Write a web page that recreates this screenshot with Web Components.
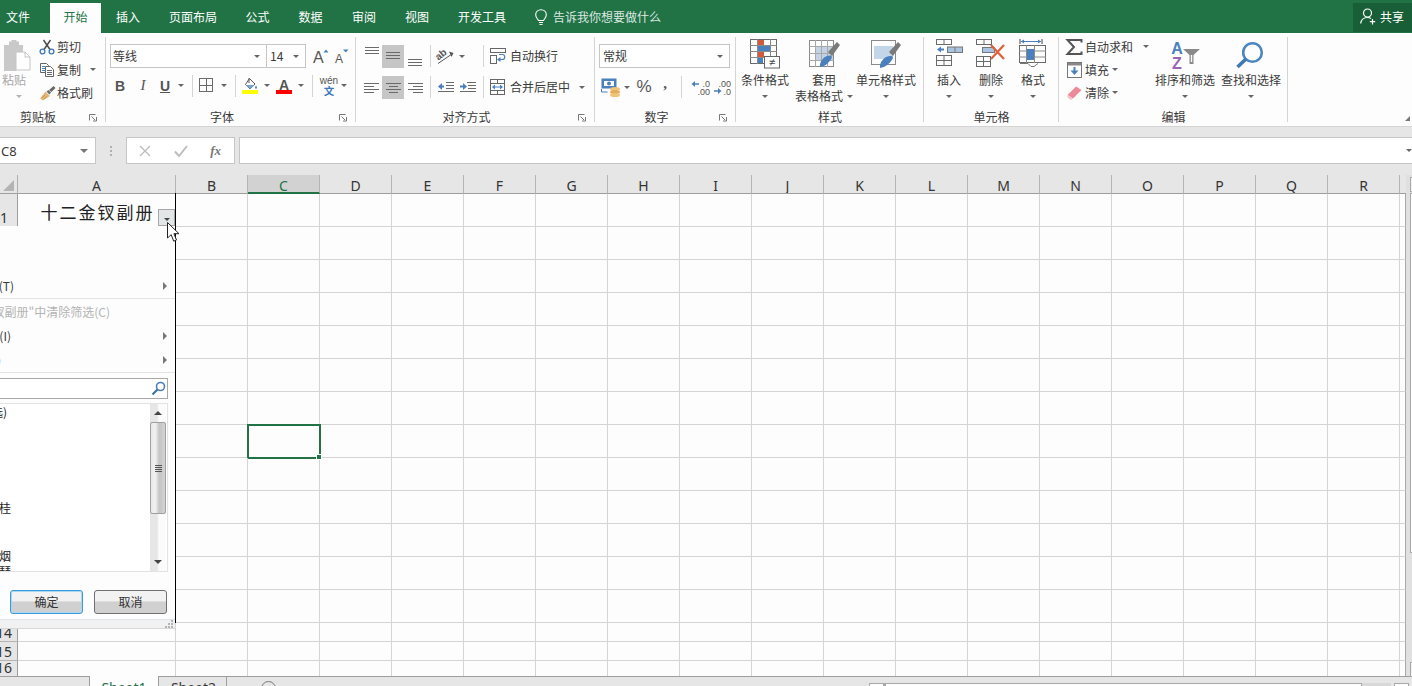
<!DOCTYPE html>
<html lang="zh"><head><meta charset="utf-8"><title>Excel</title>
<style>
html,body{margin:0;padding:0;height:100%;overflow:hidden;background:#e6e6e6}
body{font-family:"Noto Sans CJK SC","Noto Sans",sans-serif;font-size:12px;color:#3a3a3a}
</style></head><body>
<xl-app></xl-app>
<script>
const FONT='"Noto Sans CJK SC","Noto Sans",sans-serif';
const G='#6a6a6a',B='#4a80bd',R='#d4583a';
const L=(x1,y,x2,c=G)=>`<path d="M${x1} ${y+.5}H${x2}" stroke="${c}"/>`;
const grid=(x,y,w,h,c=G)=>`<rect x="${x+.5}" y="${y+.5}" width="${w-1}" height="${h-1}" fill="none" stroke="${c}"/>`;
const ICONS={
 paste:[30,33,`<path d="M3 7h5V3.5h2.5V2h5v1.500H18V7h4v7h-7v19H3z" fill="#c9c9c9"/><path d="M15 14h9l5 5v13H15z" fill="#fff" stroke="#c4c4c4"/><path d="M24 14v5h5" fill="none" stroke="#c4c4c4"/>`],
 scissors:[16,16,`<path d="M4.500 1l6.500 9.500M11.500 1L5 10.500" stroke="#4c4c4c" stroke-width="1.500" fill="none"/><circle cx="3.500" cy="12.500" r="2.400" fill="none" stroke="#3d78b8" stroke-width="1.300"/><circle cx="12.500" cy="12.500" r="2.400" fill="none" stroke="#3d78b8" stroke-width="1.300"/>`],
 copy:[16,15,`<path d="M1.500 1.500h6l2 2v7h-8z" fill="#fff" stroke="#666"/><path d="M6.500 4.500h5l3 3v7h-8z" fill="#fff" stroke="#666"/>${L(3,4,6,B)}${L(3,6,6,B)}${L(3,8,6,B)}${L(8,8,13,G)}${L(8,10,13,G)}${L(8,12,13,G)}`],
 brush:[17,16,`<path d="M1 13.500L6.500 6.500 11 11 4 15.500z" fill="#e6b877"/><path d="M3 13l3-3M5 14l3-3" stroke="#c9954e"/><path d="M7.500 6.500l2-1.500 2.500 2.500-1.500 2zM10 5l4.500-4 2 2L12.500 7z" fill="#6b6b6b"/>`],
 grow:[18,16,`<text x="0" y="15" font-family="Liberation Sans" font-size="16" fill="#555">A</text><path d="M10.500 4.500L13 1.500 15.500 4.500z" fill="#4a80bd"/>`],
 shrink:[16,16,`<text x="0" y="15" font-family="Liberation Sans" font-size="12" fill="#555">A</text><path d="M8 1.500h5.500L10.750 4.500z" fill="#4a80bd"/>`],
 borders:[16,16,`${grid(0,0,14,14)}${L(0,7,14)}<path d="M7.500 0v14" stroke="${G}"/>`],
 fill:[16,17,`<path d="M7.500 1.500l5.500 5.500-5 5-4.500-4.500z" fill="#fff" stroke="#555"/><path d="M3.500 8h9L8 12z" fill="#7ba3cf"/><path d="M7 1v5" stroke="#555"/><path d="M14 8.500c1 1.500 1.500 2.500 0 3.500-1.500-1-1-2 0-3.500z" fill="#4a80bd"/><rect y="13" width="16" height="4" fill="#ff0"/>`],
 color:[16,17,`<text x="8" y="12.500" text-anchor="middle" font-family="Liberation Sans" font-weight="700" font-size="14" fill="#555">A</text><rect y="13" width="16" height="4" fill="#f00"/>`],
 wen:[18,19,`<text x="9" y="8" text-anchor="middle" font-family="Liberation Sans" font-size="10" fill="#555">wén</text><text x="9" y="19" text-anchor="middle" font-family="Noto Sans CJK SC" font-weight="700" font-size="10.500" fill="#3d78b8">文</text>`],
 atop:[15,12,`${L(1,1,15)}${L(1,4,15)}${L(1,7,15)}`],
 amid:[14,12,`${L(0,2,14)}${L(0,5,14)}${L(0,8,14)}`],
 abot:[15,12,`${L(0,4,14)}${L(0,7,14)}${L(0,10,14)}`],
 aleft:[15,11,`${L(0,1,15)}${L(0,4,10)}${L(0,7,15)}${L(0,10,10)}`],
 acen:[15,11,`${L(0,1,15)}${L(3,4,12)}${L(0,7,15)}${L(3,10,12)}`],
 aright:[15,11,`${L(0,1,15)}${L(5,4,15)}${L(0,7,15)}${L(5,10,15)}`],
 orient:[18,16,`<text x="0" y="9" transform="rotate(-40 6 9)" font-family="Liberation Sans" font-weight="700" font-size="10" fill="#555">ab</text><path d="M1 15.500L15 6" stroke="#555"/><path d="M12 3.500l4.500 1.500-2 4z" fill="#555"/>`],
 wrap:[16,16,`<rect x=".5" y=".5" width="15" height="4" fill="#fff" stroke="#666"/><rect x=".5" y="7.500" width="6" height="8" fill="#fff" stroke="#666"/><path d="M8 11.500h4.500c3 0 3-5 0-5H9" fill="none" stroke="${B}" stroke-width="1.200"/><path d="M10.500 9l-3.500 2.500 3.500 2.500z" fill="${B}"/>`],
 merge:[16,16,`${grid(0,0,15,16,'#666')}<path d="M0 4.500h15M0 11.500h15M7.500 0v4M7.500 12v4" stroke="#666"/><path d="M3 8h9" stroke="${B}"/><path d="M5 5.500L2 8l3 2.500zM10 5.500L13 8l-3 2.500z" fill="${B}"/>`],
 indl:[16,12,`${L(8,1,16)}${L(8,4,16)}${L(8,7,16)}${L(0,10,16)}<path d="M6 5.500H2" stroke="${B}" stroke-width="2"/><path d="M4 2L0 5.500 4 9z" fill="${B}"/>`],
 indr:[16,12,`${L(7,1,16)}${L(8,4,16)}${L(8,7,16)}${L(0,10,16)}<path d="M0 5.500h4" stroke="${B}" stroke-width="2"/><path d="M3 2l4 3.500L3 9z" fill="${B}"/>`],
 currency:[20,19,`<rect x=".5" y=".5" width="15" height="10" fill="#4a80bd"/><rect x="3" y="3" width="10" height="5" fill="#fff"/><circle cx="8" cy="5.500" r="2" fill="#4a80bd"/><path d="M.500 11v3h6" fill="none" stroke="#4a80bd"/><ellipse cx="14" cy="11" rx="5" ry="2" fill="#f0c37a"/><ellipse cx="14" cy="14" rx="5" ry="2" fill="#e5ad5c"/><ellipse cx="14" cy="17" rx="5" ry="2" fill="#f0c37a"/>`],
 decinc:[20,15,`<text x="20" y="6.500" text-anchor="end" font-family="Liberation Sans" font-size="9" fill="#555">.0</text><text x="20" y="14.500" text-anchor="end" font-family="Liberation Sans" font-size="9" fill="#555">.00</text><path d="M9 4H4" stroke="${B}" stroke-width="1.500"/><path d="M5 1L1.500 4 5 7z" fill="${B}"/>`],
 decdec:[20,15,`<text x="20" y="6.500" text-anchor="end" font-family="Liberation Sans" font-size="9" fill="#555">.00</text><text x="20" y="14.500" text-anchor="end" font-family="Liberation Sans" font-size="9" fill="#555">.0</text><path d="M3 11h5" stroke="${B}" stroke-width="1.500"/><path d="M7 8l3.500 3L7 14z" fill="${B}"/>`],
 cond:[30,30,`${grid(0,0,27,25)}<path d="M7.500 0v25M20.500 0v25M0 6.500h27M0 12.500h27M0 18.500h27" stroke="#8a8a8a"/><rect x="8" y="1" width="6" height="5" fill="${R}"/><rect x="8" y="7" width="12" height="5" fill="${B}"/><rect x="8" y="13" width="6" height="5" fill="${R}"/><rect x="8" y="19" width="5" height="5" fill="${B}"/><rect x="14.500" y="17.500" width="15" height="11.500" fill="#fff" stroke="#666"/><text x="22" y="27" text-anchor="middle" font-family="Liberation Sans" font-size="11" fill="#444">≠</text>`],
 table:[31,30,`${grid(0,1,25,27,'#8a8a8a')}<rect x="6" y="8" width="18" height="14" fill="#c3d2e4"/><path d="M6.500 1v27M12.500 1v27M18.500 1v27M0 7.500h25M0 14.500h25M0 21.500h25" stroke="#a8a8a8"/><path d="M19 13L28 3l3 3-8 11z" fill="#7a7a7a"/><path d="M11 28c-1-5 4-12 11-11.500 1 1 1 2 .5 3-3 5-7 8-11.500 8.500z" fill="#4a80bd"/>`],
 cellstyle:[30,30,`${grid(0,1,25,25,'#8a8a8a')}<rect x="3" y="7" width="19" height="13" fill="#c3d5e8"/><path d="M18 13L27 3l3 3-8 11z" fill="#7a7a7a"/><path d="M9 29c-1-6 5-13 12-12 1 1 1 2 .5 3-3 5-7 8-12.500 9z" fill="#4a80bd"/>`],
 insert:[27,27,`${grid(0,0,16,6)}<path d="M8 0v6" stroke="${G}"/><rect x="11.500" y="8" width="15" height="5.500" fill="#a9c4e0" stroke="#777"/><path d="M19 8v5" stroke="#777"/><path d="M8 10.500H4" stroke="${B}" stroke-width="2"/><path d="M5 7.500L1 10.500l4 3z" fill="${B}"/>${grid(0,16,16,11)}<path d="M8 16v11M0 21.500h16" stroke="${G}"/>`],
 del:[30,28,`${grid(0,0,16,6)}<path d="M8 0v6" stroke="${G}"/><rect x="6.500" y="8.500" width="12" height="5" fill="#a9c4e0" stroke="#777"/><path d="M15 6L28 20M28 6L15 20" stroke="#e0603a" stroke-width="2.200"/>${grid(0,17,15,11)}<path d="M7.500 17v11M0 22.500h15" stroke="${G}"/>`],
 format:[28,30,`<path d="M1 0v5M23 0v5" stroke="#444"/><path d="M2 2.500h20" stroke="${B}"/><path d="M5 .5L2 2.500l3 2zM19 .5l3 2-3 2z" fill="${B}"/>${grid(0,6,27,18)}<path d="M7.500 6v18M15.500 6v18M0 12h27M0 18h27" stroke="#8a8a8a"/><rect x="8" y="10" width="7" height="11" fill="${B}"/><path d="M1 24.500h8l3 3M12 27.500h3l4-3" stroke="#777" fill="none"/>`],
 sigma:[17,16,`<path d="M15.500 3.500V1H1.500L8 8l-6.500 7H15.500v-2.500" fill="none" stroke="#555" stroke-width="2"/>`],
 filld:[15,16,`<rect x=".5" y=".5" width="14" height="15" fill="#fff" stroke="#777"/><rect x="1" y="1" width="13" height="2.500" fill="#888"/><path d="M7.500 5v6" stroke="${B}" stroke-width="2"/><path d="M3.500 8.500h8l-4 4.500z" fill="${B}"/>`],
 eraser:[15,15,`<path d="M.5 10L9 1.500l5.500 3.500L6 13.500z" fill="#ec8a9a"/><path d="M.5 10L6 13.500l-2 1.500-3.500-2.500z" fill="#f4c2cb"/>`],
 sort:[30,30,`<text x="7" y="15" text-anchor="middle" font-family="Liberation Sans" font-weight="700" font-size="16" fill="#4a80bd">A</text><text x="7" y="30" text-anchor="middle" font-family="Liberation Sans" font-weight="700" font-size="16" fill="#9a63b5">Z</text><path d="M13 10h17l-6.500 6v9h-4v-9z" fill="#8a8a8a"/><path d="M20.800 16v7h1.400v-7" fill="#fff"/>`],
 find:[30,30,`<circle cx="16.500" cy="13.500" r="9.300" fill="none" stroke="#4a86c0" stroke-width="2.600"/><path d="M10 20L1.500 28" stroke="#3f78b2" stroke-width="3.600"/>`],
 search:[15,15,`<circle cx="9.500" cy="5.500" r="4" fill="none" stroke="#4a80bd" stroke-width="1.600"/><path d="M6.500 8.500L1.500 13.500" stroke="#3f70a8" stroke-width="2.200"/>`],
 bulb:[12,17,`<path d="M3.500 11.500C2.500 9.500.7 8.500.7 5.800.7 2.800 3 .7 6 .7s5.300 2.100 5.300 5.100c0 2.700-1.800 3.700-2.800 5.700z" fill="none" stroke="#fff" stroke-width="1.100"/><path d="M4 13.500h4M4.500 15.500h3" stroke="#fff" stroke-width="1.200"/>`],
 person:[16,17,`<circle cx="7.500" cy="5" r="4" fill="none" stroke="#fff" stroke-width="1.200"/><path d="M.7 15.500c.5-4 3-6 6.800-6 1.500 0 2.600.3 3.500.9" fill="none" stroke="#fff" stroke-width="1.200"/><path d="M12.500 11v5.500M9.800 13.700h5.400" stroke="#fff" stroke-width="1.200"/>`],
 launcher:[8,7,`<path d="M.5 6.500V.5h6M2.500 2.500L6 6M7.500 3v4H4" fill="none" stroke="#777"/>`],
 x:[14,14,`<path d="M2 2l10 10M12 2L2 12" stroke="#bdbdbd" stroke-width="1.400"/>`],
 check:[14,14,`<path d="M1 7.500l4 4.500L13 2" fill="none" stroke="#bdbdbd" stroke-width="2"/>`],
 cursor:[13,21,`<path d="M.5.500V16l3.700-3.300 2.500 6.500 2.800-1.200-2.600-6.300H12z" fill="#fff" stroke="#222"/>`],
 grip:[8,8,`<path d="M6 0h2v2H6zM3 3h2v2H3zM6 3h2v2H6zM0 6h2v2H0zM3 6h2v2H3zM6 6h2v2H6z" fill="#b4b4b4"/>`]
};
class XlIcon extends HTMLElement{connectedCallback(){if(this.shadowRoot)return;const[w,h,s]=ICONS[this.getAttribute('name')];
 this.attachShadow({mode:'open'}).innerHTML=`<style>:host{display:inline-flex;flex:none;width:${w}px;height:${h}px}svg{display:block;overflow:visible}</style><svg width="${w}" height="${h}" viewBox="0 0 ${w} ${h}">${s}</svg>`;}}
class XlCaret extends HTMLElement{constructor(){super();this.attachShadow({mode:'open'}).innerHTML=`<style>:host{display:inline-block;flex:none;width:0;height:0;border:solid transparent;border-width:3px 3px 0;border-top-color:var(--caret,#666)}</style>`;}}
class XlSep extends HTMLElement{constructor(){super();this.attachShadow({mode:'open'}).innerHTML=`<style>:host{display:block;flex:none;width:1px;height:22px;background:#d4d4d4}</style>`;}}
class XlBox extends HTMLElement{constructor(){super();this.attachShadow({mode:'open'}).innerHTML=`<style>:host{display:flex;flex:none;align-items:center;justify-content:center;height:100%;box-sizing:border-box}</style><slot></slot>`;}}
class XlSelect extends HTMLElement{constructor(){super();this.attachShadow({mode:'open'}).innerHTML=`<style>:host{display:flex;flex:none;align-items:center;height:24px;box-sizing:border-box;border:1px solid #c6c6c6;background:#fff;padding:0 6px 0 2px;color:#3a3a3a}slot{display:block;flex:1}</style><slot></slot><xl-caret></xl-caret>`;}}
class XlGroup extends HTMLElement{constructor(){super();this.attachShadow({mode:'open'}).innerHTML=`<style>
:host{display:flex;flex:none;flex-direction:column;height:91px;box-sizing:border-box;background:linear-gradient(#d4d4d4,#d4d4d4) right 2px/1px 85px no-repeat}
.c{flex:none;height:74px;box-sizing:border-box;display:flex}
.l{flex:none;height:16px;display:flex;align-items:center;line-height:16px;color:#3a3a3a}
.t{flex:1;text-align:center}
.a{width:18px;display:flex}
</style><div class="c"><slot></slot></div><div class="l"><span class="t"></span><span class="a"></span></div>`;}
 connectedCallback(){const r=this.shadowRoot;r.querySelector('.t').textContent=this.getAttribute('label');const a=r.querySelector('.a');
  if(this.hasAttribute('launcher')){if(!a.firstChild)a.innerHTML='<xl-icon name="launcher" style="margin-left:1px"></xl-icon>';}else a.remove();}}
class XlLarge extends HTMLElement{constructor(){super();this.attachShadow({mode:'open'}).innerHTML=`<style>
:host{display:flex;flex:none;flex-direction:column;align-items:center;box-sizing:border-box;padding-top:4px;line-height:16px;color:#3a3a3a;height:74px}
.i{height:33px;flex:none;display:flex;justify-content:center}
.t{display:flex;flex-direction:column;align-items:center;white-space:nowrap}
</style><div class="i"><slot name="icon"></slot></div><div class="t"><slot></slot></div>`;}}
class XlRibbon extends HTMLElement{constructor(){super();this.attachShadow({mode:'open'}).innerHTML=`<style>
:host{display:flex;flex:none;height:94px;box-sizing:border-box;padding-top:2px;background:#fdfdfd;border-bottom:1px solid #d4d4d4;color:#3a3a3a;font-size:12px;line-height:16px;overflow:hidden;white-space:nowrap}
.v{display:flex;flex-direction:column}
.r{display:flex;align-items:center}
.sm{height:23px;display:flex;align-items:center}
.ln{display:flex;align-items:center;gap:3px}
.b{font:700 14px "Liberation Sans";color:#555}
.i{font:italic 15px "Liberation Serif";color:#555}
.u{font:700 14px "Liberation Sans";color:#555;text-decoration:underline}
.grey{background:#c6c6c6}
.tail{flex:1;position:relative}
.collapse{position:absolute;right:2px;top:81px;width:0;height:0;border-left:5px solid transparent;border-bottom:5px solid #777}
</style>
<xl-group label="剪贴板" launcher style="width:118px;margin-left:-12px">
 <div class="r" style="margin-left:12px;align-items:flex-start">
  <xl-large style="width:36px;color:#a8a8a8;--caret:#b4b4b4;padding-top:3px;align-items:flex-start"><xl-icon slot="icon" name="paste" style="margin-left:1px"></xl-icon><span style="margin-left:2px;display:block;margin-top:1px">粘贴</span><xl-caret style="margin-top:7px;margin-left:11px"></xl-caret></xl-large>
  <div class="v" style="margin-left:1px">
   <div class="sm"><xl-box style="width:20px"><xl-icon name="scissors"></xl-icon></xl-box>剪切</div>
   <div class="sm"><xl-box style="width:20px"><xl-icon name="copy"></xl-icon></xl-box>复制<xl-caret style="margin-left:9px"></xl-caret></div>
   <div class="sm"><xl-box style="width:20px"><xl-icon name="brush"></xl-icon></xl-box>格式刷</div>
  </div>
 </div>
</xl-group>
<xl-group label="字体" launcher style="width:250px">
 <div class="v" style="padding:9px 0 0 4px">
  <div class="r" style="height:24px">
   <xl-select style="width:157px">等线</xl-select>
   <xl-select style="width:40px;margin-left:-1px;padding-left:3px">14</xl-select>
   <xl-icon name="grow" style="margin-left:7px"></xl-icon><xl-icon name="shrink" style="margin-left:4px"></xl-icon>
  </div>
  <div class="r" style="height:25px;margin:5px 0 0 -1px">
   <xl-box style="width:22px"><span class="b">B</span></xl-box><xl-box style="width:24px"><span class="i">I</span></xl-box><xl-box style="width:20px"><span class="u">U</span></xl-box><xl-box style="width:12px"><xl-caret></xl-caret></xl-box>
   <xl-box style="width:10px"><xl-sep></xl-sep></xl-box>
   <xl-box style="width:20px"><xl-icon name="borders"></xl-icon></xl-box><xl-box style="width:14px"><xl-caret></xl-caret></xl-box>
   <xl-box style="width:8px"><xl-sep></xl-sep></xl-box>
   <xl-box style="width:22px"><xl-icon name="fill"></xl-icon></xl-box><xl-box style="width:12px"><xl-caret></xl-caret></xl-box>
   <xl-box style="width:22px"><xl-icon name="color"></xl-icon></xl-box><xl-box style="width:12px"><xl-caret></xl-caret></xl-box>
   <xl-box style="width:10px"><xl-sep></xl-sep></xl-box>
   <xl-box style="width:23px"><xl-icon name="wen"></xl-icon></xl-box><xl-box style="width:8px"><xl-caret></xl-caret></xl-box>
  </div>
 </div>
</xl-group>
<xl-group label="对齐方式" launcher style="width:239px">
 <div class="v" style="padding:9px 0 0 4px">
  <div class="r" style="height:24px">
   <xl-box style="width:22px;align-items:flex-start;padding-top:2px"><xl-icon name="atop"></xl-icon></xl-box><xl-box class="grey" style="width:22px;height:23px"><xl-icon name="amid"></xl-icon></xl-box><xl-box style="width:22px;align-items:flex-end;padding-bottom:1px"><xl-icon name="abot"></xl-icon></xl-box>
   <xl-box style="width:8px"><xl-sep></xl-sep></xl-box>
   <xl-box style="width:24px"><xl-icon name="orient"></xl-icon></xl-box><xl-box style="width:8px"><xl-caret></xl-caret></xl-box>
   <xl-box style="width:10px;margin-left:12px"><xl-sep></xl-sep></xl-box>
   <xl-box style="width:20px"><xl-icon name="wrap"></xl-icon></xl-box><span style="margin:-1px 0 0 2px">自动换行</span>
  </div>
  <div class="r" style="height:24px;margin-top:7px">
   <xl-box style="width:22px"><xl-icon name="aleft"></xl-icon></xl-box><xl-box class="grey" style="width:22px;height:23px"><xl-icon name="acen"></xl-icon></xl-box><xl-box style="width:22px"><xl-icon name="aright"></xl-icon></xl-box>
   <xl-box style="width:8px"><xl-sep></xl-sep></xl-box>
   <xl-box style="width:24px"><xl-icon name="indl"></xl-icon></xl-box><xl-box style="width:20px"><xl-icon name="indr"></xl-icon></xl-box>
   <xl-box style="width:10px"><xl-sep></xl-sep></xl-box>
   <xl-box style="width:20px"><xl-icon name="merge"></xl-icon></xl-box><span style="margin-left:2px">合并后居中</span><xl-box style="width:24px"><xl-caret></xl-caret></xl-box>
  </div>
 </div>
</xl-group>
<xl-group label="数字" launcher style="width:141px">
 <div class="v" style="padding:9px 0 0 4px">
  <xl-select style="width:131px;padding-left:3px">常规</xl-select>
  <div class="r" style="height:24px;margin-top:7px">
   <xl-box style="width:24px"><xl-icon name="currency"></xl-icon></xl-box><xl-box style="width:8px"><xl-caret></xl-caret></xl-box>
   <xl-box style="width:26px"><span style="font:17px 'Liberation Sans';color:#555">%</span></xl-box><xl-box style="width:16px"><span style="font:700 15px/15px 'Liberation Serif';color:#555;margin-top:-7px">,</span></xl-box>
   <xl-box style="width:16px"><xl-sep></xl-sep></xl-box>
   <xl-box style="width:21px"><xl-icon name="decinc"></xl-icon></xl-box><xl-box style="width:22px"><xl-icon name="decdec"></xl-icon></xl-box>
  </div>
 </div>
</xl-group>
<xl-group label="样式" style="width:188px">
 <xl-large style="width:58px"><xl-icon slot="icon" name="cond"></xl-icon><span>条件格式</span><xl-caret style="margin-top:7px"></xl-caret></xl-large>
 <xl-large style="width:60px"><xl-icon slot="icon" name="table"></xl-icon><span>套用</span><span class="ln" style="gap:4px">表格格式<xl-caret></xl-caret></span></xl-large>
 <xl-large style="width:64px"><xl-icon slot="icon" name="cellstyle"></xl-icon><span>单元格样式</span><xl-caret style="margin-top:7px"></xl-caret></xl-large>
</xl-group>
<xl-group label="单元格" style="width:135px">
 <xl-large style="width:50px"><xl-icon slot="icon" name="insert"></xl-icon><span>插入</span><xl-caret style="margin-top:7px"></xl-caret></xl-large>
 <xl-large style="width:34px"><xl-icon slot="icon" name="del"></xl-icon><span>删除</span><xl-caret style="margin-top:7px"></xl-caret></xl-large>
 <xl-large style="width:50px"><xl-icon slot="icon" name="format"></xl-icon><span>格式</span><xl-caret style="margin-top:7px"></xl-caret></xl-large>
</xl-group>
<xl-group label="编辑" style="width:229px">
 <div class="v" style="width:95px;padding:0 0 0 5px;box-sizing:border-box">
  <div class="sm"><xl-box style="width:21px"><xl-icon name="sigma"></xl-icon></xl-box>自动求和<xl-caret style="margin-left:10px"></xl-caret></div>
  <div class="sm"><xl-box style="width:21px"><xl-icon name="filld"></xl-icon></xl-box>填充<xl-caret style="margin-left:3px"></xl-caret></div>
  <div class="sm"><xl-box style="width:21px"><xl-icon name="eraser"></xl-icon></xl-box>清除<xl-caret style="margin-left:3px"></xl-caret></div>
 </div>
 <xl-large style="width:62px"><xl-icon slot="icon" name="sort"></xl-icon><span>排序和筛选</span><xl-caret style="margin-top:7px"></xl-caret></xl-large>
 <xl-large style="width:66px;margin-left:2px"><xl-icon slot="icon" name="find"></xl-icon><span>查找和选择</span><xl-caret style="margin-top:7px"></xl-caret></xl-large>
</xl-group>
<div class="tail"><span class="collapse"></span></div>`;}}
class XlTitlebar extends HTMLElement{constructor(){super();
 const tabs=[['文件',50,'justify-content:flex-start;padding-left:6px'],['开始',51],['插入',54],['页面布局',76],['公式',53],['数据',53],['审阅',54],['视图',52],['开发工具',78]];
 this.attachShadow({mode:'open'}).innerHTML=`<style>
:host{display:flex;flex:none;height:33px;background:#217346;color:#fff;font-size:12px;line-height:16px;box-sizing:border-box;white-space:nowrap}
.t{flex:none;display:flex;align-items:center;justify-content:center;box-sizing:border-box;height:30px;margin-top:3px;padding-bottom:3px}
.t.on{background:#fdfdfd;color:#217346;height:30px}
.tell{display:flex;align-items:center;margin-left:14px;color:#dbe8e0;gap:6px;height:33px;padding-top:1px;box-sizing:border-box}
.share{margin-left:auto;flex:none;width:59px;height:29px;margin-top:3px;background:#185f38;display:flex;align-items:center;gap:4px;padding:0 0 2px 7px;box-sizing:border-box}
</style>${tabs.map((t,i)=>`<div class="t${i==1?' on':''}" style="width:${t[1]}px;${t[2]||''}">${t[0]}</div>`).join('')}
<div class="tell"><xl-icon name="bulb"></xl-icon><span>告诉我你想要做什么</span></div>
<div class="share"><xl-icon name="person"></xl-icon><span>共享</span></div>`;}}
class XlFormula extends HTMLElement{constructor(){super();this.attachShadow({mode:'open'}).innerHTML=`<style>
:host{display:flex;flex:none;height:48px;box-sizing:border-box;padding-top:10px;background:#e6e6e6;font-size:12px;color:#3a3a3a}
.box{height:27px;box-sizing:border-box;border:1px solid #c6c6c6;background:#fff;display:flex;align-items:center;flex:none}
.name{width:96px;padding:0 7px 0 1px;justify-content:space-between;border-left:0;font:13px "Noto Sans",sans-serif;color:#3a3a3a;--caret:#777}
.name xl-caret{border-width:4px 4px 0}
.dots{width:30px;height:27px;flex:none;display:flex;flex-direction:column;align-items:center;justify-content:center;gap:2px}
.dots i{width:2px;height:2px;background:#b0b0b0}
.fn{width:109px;justify-content:space-between;padding:0 13px 0 11px}
.fx{font:italic 700 13px "Liberation Serif",serif;color:#777}
.in{flex:1;margin-left:4px;justify-content:flex-end;padding-right:0;border-right:0;--caret:#666}
</style><div class="box name"><span>C8</span><xl-caret></xl-caret></div>
<div class="dots"><i></i><i></i><i></i></div>
<div class="box fn"><xl-icon name="x"></xl-icon><xl-icon name="check" style="margin-left:22px"></xl-icon><span class="fx" style="margin-left:22px">fx</span></div>
<div class="box in"><xl-caret></xl-caret></div>`;}}
class XlMenu extends HTMLElement{constructor(){super();
 const names=['(全选)','','','','','','夏金桂','','','邢岫烟','薛宝琴'];
 const item=(txt,end,arrow,cls='')=>`<div class="it ${cls}"><span class="e" style="width:${end}px"><span>${txt}</span></span>${arrow?'<i class="ar"></i>':''}</div>`;
 this.attachShadow({mode:'open'}).innerHTML=`<style>
:host{display:flex;flex-direction:column;box-sizing:border-box;width:175px;height:403px;background:#fdfdfd;overflow:hidden;padding-top:48px;font-size:12px;line-height:16px;color:#3a3a3a;white-space:nowrap}
.it{height:24px;flex:none;display:flex;align-items:center;justify-content:space-between;padding-right:8px;box-sizing:border-box}
.e{display:flex;justify-content:flex-end}.e span{flex:none}
.off{color:#b4b4b4;margin-top:1px}
.ar{width:0;height:0;border:solid transparent;border-width:4px 0 4px 4px;border-left-color:#777}
.hr{height:1px;flex:none;background:#e3e3e3}
.s{flex:none;margin-top:5px;margin-left:-20px;width:188px;height:21px;box-sizing:border-box;border:1px solid #a8a8a8;display:flex;align-items:center;justify-content:flex-end;padding-right:1px;background:#fff}
.l{flex:none;margin-top:4px;margin-left:-20px;width:188px;height:169px;box-sizing:border-box;border:1px solid #e3e3e3;display:flex;background:#fff;overflow:hidden}
.ns{flex:1;margin-left:-5px;color:#222}
.ns div{height:16px;line-height:16px;margin-left:-1px}
.sb{flex:none;width:16px;margin-right:1px;display:flex;flex-direction:column;align-items:center;background:linear-gradient(90deg,#e6e6e6 45%,#fbfbfb 55%,#fbfbfb)}
.up,.dn{flex:none;width:0;height:0;border:solid transparent;border-width:0 4px 4px}
.up{border-bottom-color:#444;margin-top:7px}.dn{border-width:4px 4px 0;border-top-color:#444;margin-top:46px}
.th{flex:none;width:16px;height:92px;margin-top:7px;box-sizing:border-box;border:1px solid #a0a0a0;border-radius:2px;background:linear-gradient(90deg,#e8e8e8,#f2f2f2 30%,#c4c4c4 60%,#d4d4d4);display:flex;flex-direction:column;justify-content:center;align-items:center;gap:1px}
.th i{width:7px;height:1px;background:#555}
.bt{flex:none;margin-top:18px;display:flex;gap:11px;padding-left:10px}
.bt span{width:73px;height:24px;box-sizing:border-box;border:1px solid #707070;border-radius:3px;display:flex;align-items:center;justify-content:center;background:linear-gradient(#f2f2f2 45%,#d0d0d0 50%);color:#333}
.bt span:first-child{border-color:#3c9ad8;box-shadow:inset 0 0 0 1px #a8d8f2}
.st{flex:none;margin-top:5px;height:11px;background:#f1f1f1;border-top:1px solid #e0e6ea;border-bottom:2px solid #d8d8d8;box-sizing:border-box;display:flex;justify-content:flex-end;align-items:flex-end;padding-right:2px}
</style>
${item('按颜色排序(T)',14,1)}<div class="hr"></div>
${item('从"十二金钗副册"中清除筛选(C)',110,0,'off')}
${item('按颜色筛选(I)',11,1)}${item('文本筛选(F)',1,1)}<div class="hr"></div>
<div class="s"><xl-icon name="search"></xl-icon></div>
<div class="l"><div class="ns">${names.map(n=>`<div>${n}</div>`).join('')}</div>
<div class="sb"><i class="up"></i><div class="th"><i></i><i></i><i></i><i></i></div><i class="dn"></i></div></div>
<div class="bt"><span>确定</span><span>取消</span></div>
<div class="st"><xl-icon name="grip"></xl-icon></div>`;}}
class XlSheet extends HTMLElement{constructor(){super();
 const cols='BCDEFGHIJKLMNOPQR'.split('');
 const hs=[33,...Array(12).fill(33),19,19,16];
 let h=`<div class="corner"><svg width="18" height="18"><path d="M14 5v11H3z" fill="#b4b4b4"/></svg></div><div class="ch" style="">A</div>`;
 cols.forEach(c=>h+=`<div class="ch${c=='C'?' sel':''}">${c}</div>`);h+='<div class="ch end"></div>';
 hs.forEach((_,i)=>{const r=i+1;
  h+=`<div class="rh"><span>${r}</span></div>`;
  h+=`<div class="cell a">${r==1?'<span class="title">十二金钗副册</span><span class="fb"><xl-caret></xl-caret></span>':''}</div>`;
  cols.forEach(c=>{h+=`<div class="cell${c=='C'&&r==8?' active':''}"></div>`});
  h+='<div class="cell end"></div>';
 });
 this.attachShadow({mode:'open'}).innerHTML=`<style>
:host{display:grid;flex:none;position:relative;height:502px;grid-template-columns:18px 158px repeat(17,72px) 6px;grid-template-rows:19px ${hs.map(x=>x+'px').join(' ')};background:#fdfdfd;overflow:hidden;color:#3a3a3a}
.corner{background:#e6e6e6;border-bottom:1px solid #9e9e9e;border-right:1px solid #b0b0b0;box-sizing:border-box;height:19px}
.corner svg{display:block}
.ch{background:#e6e6e6;border-bottom:1px solid #9e9e9e;border-right:1px solid #b4b4b4;box-sizing:border-box;font:14px/17px "Noto Sans",sans-serif;color:#333;text-align:center;padding-top:2px;overflow:hidden}
.ch.sel{background:#d2d2d2;border-bottom:2px solid #217346;color:#217346}
.ch.end{border-right:0}
.rh{background:#e6e6e6;border-bottom:1px solid #b4b4b4;border-right:1px solid #9e9e9e;box-sizing:border-box;display:flex;align-items:flex-end;overflow:hidden;font:14px/16px "Noto Sans",sans-serif;color:#333}
.rh span{display:block;width:16px;margin-left:-4px;text-align:center;flex:none}
.cell{border-right:1px solid #d4d4d4;border-bottom:1px solid #d4d4d4;box-sizing:border-box;position:relative}
.cell.end{border-right:1px solid #a8a8a8;border-bottom:1px solid #d4d4d4}
.cell.a{display:flex;align-items:center;justify-content:center}
.title{font:400 17px/22px "Noto Sans CJK SC",sans-serif;letter-spacing:2px;color:#222;margin-top:4px;margin-left:2px}
.fb{position:absolute;right:0;bottom:0;width:17px;height:17px;box-sizing:border-box;border:1px solid #a6a6a6;background:#e3e6e6;display:flex;align-items:center;justify-content:center;padding-top:3px;--caret:#444}
.fb xl-caret{border-width:3.500px 3.500px 0}
.active::after{content:"";position:absolute;left:-1px;top:-1px;width:74px;height:35px;box-sizing:border-box;border:2px solid #217346}
.active::before{content:"";position:absolute;right:-3px;bottom:-3px;width:6px;height:6px;background:#217346;border:1px solid #fff;box-sizing:border-box;z-index:2}
.bot{position:absolute;left:0;right:0;bottom:0;height:1px;background:#9e9e9e}
xl-menu{position:absolute;left:0;top:51px;z-index:3}
.bl{position:absolute;left:175px;top:18px;width:1px;height:430px;background:#000;z-index:4}
.cur{position:absolute;left:167px;top:47px;z-index:5}
</style>${h}<xl-menu></xl-menu><div class="bl"></div><xl-icon class="cur" name="cursor"></xl-icon><div class="bot"></div>`;}}
class XlVbar extends HTMLElement{constructor(){super();this.attachShadow({mode:'open'}).innerHTML=`<style>
:host{display:flex;flex-direction:column;flex:none;width:6px;height:502px;background:#e0e0e0;box-sizing:border-box;padding:2px 0 0 4px;border-bottom:1px solid #9e9e9e}
b{display:block;flex:none;box-sizing:border-box;border:1px solid #a8a8a8;border-right:0;background:#f4f4f4}
</style><b style="height:15px"></b><b style="height:360px;background:#fff;margin-top:1px"></b><b style="height:15px;margin-top:109px"></b>`;}}
class XlStatus extends HTMLElement{constructor(){super();this.attachShadow({mode:'open'}).innerHTML=`<style>
:host{display:flex;flex:none;height:9px;background:#e6e6e6;overflow:visible;font:14px/20px "Noto Sans",sans-serif;color:#3a3a3a;position:relative;z-index:6}
.nav{width:90px;flex:none;border-right:1px solid #9e9e9e;box-sizing:border-box}
.tab{flex:none;box-sizing:border-box;text-align:center;overflow:hidden;white-space:nowrap}
.on{width:69px;background:#fdfdfd;color:#217346;margin-top:-1px;height:11px;line-height:24px;border-right:1px solid #9e9e9e}
.off{width:68px;height:9px;border-right:1px solid #9e9e9e;line-height:22px;padding-left:2px}
.add{flex:none;width:15px;height:15px;border:1px solid #777;border-radius:50%;box-sizing:border-box;margin:4px 0 0 34px}
.hs{margin-left:auto;display:flex;padding-top:6px;padding-right:3px;overflow:hidden;height:9px;box-sizing:border-box}
.hs b{display:block;height:6px;box-sizing:border-box;border:1px solid #a8a8a8;background:#fdfdfd;flex:none}
</style><div class="nav"></div><div class="tab on">Sheet1</div><div class="tab off">Sheet2</div><div class="add"></div>
<div class="hs"><b style="width:15px"></b><b style="width:478px;border-left-width:2px"></b><b style="width:29px;background:#d8d8d8;border:0"></b><b style="width:15px;margin-left:3px"></b></div>`;}}
class XlApp extends HTMLElement{constructor(){super();this.attachShadow({mode:'open'}).innerHTML=`<style>
:host{display:flex;flex-direction:column;width:1412px;height:686px;overflow:hidden;font-family:${FONT};font-size:12px}
.m{display:flex;flex:none;height:502px}
</style><xl-titlebar></xl-titlebar><xl-ribbon></xl-ribbon><xl-formula></xl-formula>
<div class="m"><xl-sheet></xl-sheet><xl-vbar></xl-vbar></div><xl-status></xl-status>`;}}
[['xl-icon',XlIcon],['xl-caret',XlCaret],['xl-sep',XlSep],['xl-box',XlBox],['xl-select',XlSelect],['xl-group',XlGroup],['xl-large',XlLarge],['xl-ribbon',XlRibbon],['xl-titlebar',XlTitlebar],['xl-formula',XlFormula],['xl-menu',XlMenu],['xl-sheet',XlSheet],['xl-vbar',XlVbar],['xl-status',XlStatus],['xl-app',XlApp]].forEach(([n,c])=>customElements.define(n,c));
</script>
</body></html>
